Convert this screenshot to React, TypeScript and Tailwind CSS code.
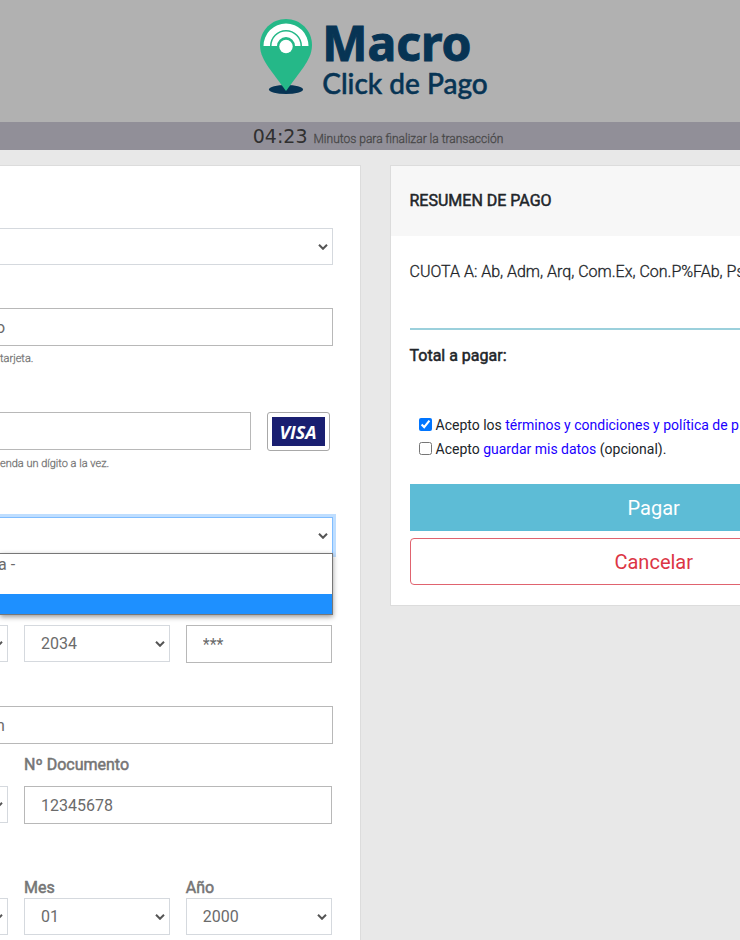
import { useState } from "react";
import type { InputHTMLAttributes, ReactNode } from "react";
import clsx from "clsx";

interface SelectFieldProps {
  label: string;
  options: string[];
  focused?: boolean;
  clipped?: boolean;
}

const SelectField = ({ label, options, focused, clipped }: SelectFieldProps) => (
  <div className="relative">
    <select
      aria-label={label}
      className={clsx(
        "block h-[37px] w-full appearance-none border bg-white text-base text-[#6b6b6b] outline-none",
        clipped ? "border-l-0" : "pl-4",
        focused ? "border-[#80bdff] shadow-[0_0_0_3px_#bfdeff]" : "border-[#d5d9de]"
      )}
    >
      {options.map((option) => (
        <option key={option}>{option}</option>
      ))}
    </select>
    <svg
      className="pointer-events-none absolute top-4 right-[5px] h-[6px] w-[10px]"
      viewBox="0 0 10 6"
      fill="none"
      stroke="#555"
      strokeWidth="2"
    >
      <path d="M1 .8l4 4 4-4" />
    </svg>
  </div>
);

interface TextFieldProps extends InputHTMLAttributes<HTMLInputElement> {
  label: string;
  clipped?: boolean;
}

const TextField = ({ label, clipped, ...props }: TextFieldProps) => (
  <input
    aria-label={label}
    className={clsx(
      "block h-[38px] w-full min-w-0 border border-[#b8b8b8] bg-white text-base text-[#6b6b6b] outline-none",
      clipped ? "-indent-1 border-l-0" : "pl-4"
    )}
    {...props}
  />
);

const HelpText = ({ children }: { children: ReactNode }) => (
  <p className="mt-1 h-4 text-[11px] leading-[18px] font-light text-[#777] [-webkit-text-stroke:0.3px]">{children}</p>
);

const FieldLabel = ({ children }: { children: ReactNode }) => (
  <span className="block h-5 text-base leading-5 font-normal text-[#757575] [-webkit-text-stroke:0.5px]">
    {children}
  </span>
);

const Logo = () => (
  <div className="flex items-start gap-2.5">
    <svg className="h-[78px] w-[52px]" viewBox="0 0 52 78">
      <ellipse cx="26" cy="70.500" rx="17" ry="4.500" fill="#073454" />
      <path
        d="M26 0C11.500 0 0 11.500 0 26c0 9 4 15.500 9 23l17 23 17-23c5-7.500 9-14 9-23C52 11.500 40.500 0 26 0z"
        fill="#25b888"
      />
      <path d="M3.500 27a22.500 22.500 0 0 1 45 0h-6.500a16 16 0 0 0-32 0z" fill="#fff" />
      <path d="M11.500 27a14.500 14.500 0 0 1 29 0h-5.500a9 9 0 0 0-18 0z" fill="#fff" />
      <circle cx="26" cy="27.500" r="6.700" fill="#fff" />
    </svg>
    <div className="text-[#073454]">
      <div className="font-['Noto_Sans'] text-[48px] leading-[48px] font-bold [-webkit-text-stroke:1px]">Macro</div>
      <div className="font-['Lato'] text-[28px] leading-8 font-medium [-webkit-text-stroke:0.5px]">Click de Pago</div>
    </div>
  </div>
);

const Header = () => (
  <header>
    <div className="flex h-[122px] justify-center bg-[#b1b1b1] pt-[19px] pl-2">
      <Logo />
    </div>
    <div className="flex h-7 items-baseline justify-center gap-1.5 bg-[#918f98] pl-4 text-[#303030]">
      <span className="font-['DejaVu_Sans'] text-[19px] leading-7">04:23</span>
      <span className="text-xs leading-7 font-light text-[#484848] [-webkit-text-stroke:0.3px]">
        Minutos para finalizar la transacción
      </span>
    </div>
  </header>
);

const VisaBadge = () => (
  <div className="h-[39px] w-[63px] rounded-[3px] border border-[#a8a8a8] bg-white p-1">
    <div className="flex h-full items-center justify-center bg-[#1a1f71] font-['Open_Sans'] text-lg leading-none font-bold text-white italic">
      VISA
    </div>
  </div>
);

const BankDropdown = () => (
  <ul
    role="listbox"
    aria-label="Cuotas"
    className="absolute top-full right-0 left-0 z-10 -mt-px border border-l-0 border-[#777] bg-white text-base text-[#6b6b6b] shadow-[0_2px_5px_rgba(0,0,0,0.4)]"
  >
    <li role="option" aria-selected="false" className="h-5 -indent-0.5 leading-[22px]">
      a -
    </li>
    <li role="option" aria-selected="false" className="h-5" />
    <li role="option" aria-selected="true" className="h-5 bg-[#1e90ff]" />
  </ul>
);

const PaymentForm = () => (
  <form className="border border-l-0 border-[#dcdcdc] bg-white pt-[62px] pr-[27px] pb-10">
    <SelectField label="Medio de pago" options={[""]} clipped />

    <div className="mt-[43px]">
      <TextField label="Nombre" defaultValue="o" clipped />
      <HelpText>tarjeta.</HelpText>
    </div>

    <div className="mt-[46px]">
      <div className="flex gap-4">
        <div className="min-w-0 flex-1">
          <TextField label="Número de tarjeta" clipped />
        </div>
        <div className="pr-[3px]">
          <VisaBadge />
        </div>
      </div>
      <HelpText>enda un dígito a la vez.</HelpText>
    </div>

    <div className="relative mt-[46px]">
      <SelectField label="Cuotas" options={[""]} focused clipped />
      <BankDropdown />
    </div>

    <div className="mt-[71px] grid grid-cols-[8px_1fr_1fr] gap-4 pr-px">
      <div className="overflow-hidden">
        <SelectField label="Mes de vencimiento" options={[""]} clipped />
      </div>
      <SelectField label="Año de vencimiento" options={["2034"]} />
      <TextField label="Código de seguridad" defaultValue="***" />
    </div>

    <div className="mt-[43px]">
      <TextField label="Correo electrónico" defaultValue="n" clipped />
    </div>

    <div className="mt-[11px] grid grid-cols-[8px_1fr] gap-4 pr-px">
      <div className="overflow-hidden pt-[31px]">
        <SelectField label="Tipo de documento" options={[""]} clipped />
      </div>
      <label>
        <FieldLabel>Nº Documento</FieldLabel>
        <div className="mt-[11px]">
          <TextField label="Nº Documento" defaultValue="12345678" />
        </div>
      </label>
    </div>

    <div className="mt-[54px] grid grid-cols-[8px_1fr_1fr] items-end gap-4 pr-px">
      <div className="overflow-hidden">
        <SelectField label="Día" options={[""]} clipped />
      </div>
      <label>
        <FieldLabel>Mes</FieldLabel>
        <SelectField label="Mes" options={["01"]} />
      </label>
      <label>
        <FieldLabel>Año</FieldLabel>
        <SelectField label="Año" options={["2000"]} />
      </label>
    </div>
  </form>
);

const PaymentSummary = () => {
  const [accepted, setAccepted] = useState(true);
  const [save, setSave] = useState(false);

  return (
    <section className="-mr-[178px] border border-[#dcdcdc] bg-white pb-5 text-[#212529]">
      <h2 className="h-[70px] bg-[#f7f7f7] px-[19px] text-base leading-[70px] font-normal [-webkit-text-stroke:0.5px]">
        RESUMEN DE PAGO
      </h2>
      <div className="px-[19px]">
        <p className="pt-6 text-base font-light whitespace-nowrap [-webkit-text-stroke:0.3px]">
          CUOTA A: Ab, Adm, Arq, Com.Ex, Con.P%FAb, Ps
        </p>
        <hr className="mt-11 h-0.5 border-0 bg-[#9bd0dc]" />
        <p className="mt-[14px] text-base font-normal [-webkit-text-stroke:0.5px]">Total a pagar:</p>

        <div className="mt-[45px] pl-[9px] text-sm leading-6">
          <div className="flex items-center gap-1 whitespace-nowrap">
            <input
              id="terms"
              type="checkbox"
              className="mb-0.5 size-[13px]"
              checked={accepted}
              onChange={(e) => setAccepted(e.target.checked)}
            />
            <label htmlFor="terms">
              Acepto los{" "}
              <a href="#terminos" className="text-[#1b00ff]">
                términos y condiciones y política de p
              </a>
            </label>
          </div>
          <div className="flex items-center gap-1 whitespace-nowrap">
            <input
              id="save"
              type="checkbox"
              className="mb-0.5 size-[13px]"
              checked={save}
              onChange={(e) => setSave(e.target.checked)}
            />
            <label htmlFor="save">
              Acepto{" "}
              <a href="#guardar" className="text-[#1b00ff]">
                guardar mis datos
              </a>{" "}
              (opcional).
            </label>
          </div>
        </div>

        <button type="button" className="mt-[23px] block h-[47px] w-full bg-[#5dbcd6] text-xl text-white">
          Pagar
        </button>
        <button
          type="button"
          className="mt-[7px] block h-[47px] w-full rounded border border-[#e0636f] text-xl text-[#dc3545]"
        >
          Cancelar
        </button>
      </div>
    </section>
  );
};

const App = () => (
  <div className="min-h-screen overflow-x-hidden bg-[#e8e8e8] font-['Roboto',sans-serif]">
    <Header />
    <main className="mt-[15px] grid grid-cols-[36fr_35fr] items-start gap-[29px]">
      <PaymentForm />
      <PaymentSummary />
    </main>
  </div>
);

export default App;
